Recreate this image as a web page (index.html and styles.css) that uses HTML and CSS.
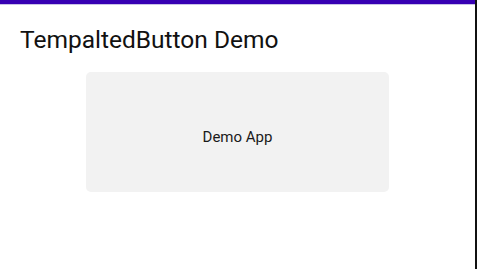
FILE: index.html
```html
<!DOCTYPE html>
<html lang="en">
<head>
  <meta charset="UTF-8">
  <title>TempaltedButton Demo</title>
  <meta name="viewport" content="width=device-width, initial-scale=1.0">
  <link rel="stylesheet" href="styles.css">
</head>
<body>
  <div class="window">
    <div class="statusbar"></div>
    <div class="page">
      <h1 class="title">TempaltedButton Demo</h1>
      <div class="card">
        <span class="card-label">Demo App</span>
      </div>
    </div>
  </div>
</body>
</html>
```

FILE: styles.css
```css
html, body{
  margin: 0;
  padding: 0;
  background: #ffffff;
}
.window{
  width: 475px;
  height: 269px;
  border-right: 2px solid #111111;
  box-sizing: content-box;
  overflow: hidden;
}
.statusbar{
  height: 4px;
  background: #3700b3;
  border-bottom: 1px solid #c9c2e6;
}
.page{
  display: flex;
  flex-direction: column;
}
.title{
  margin: 0;
  padding: 20px 0 0 20px;
  font-family: Roboto, "Liberation Sans", sans-serif;
  font-weight: 400;
  font-size: 24.5px;
  line-height: 29px;
  color: #111111;
}
.card{
  margin: 18px 0 0 86px;
  padding-top: 10px;
  box-sizing: border-box;
  width: 303px;
  height: 120px;
  background: #f2f2f2;
  border-radius: 5px;
  display: flex;
  align-items: center;
  justify-content: center;
}
.card-label{
  font-family: Roboto, "Liberation Sans", sans-serif;
  font-size: 15px;
  color: #1a1a1a;
}
```
